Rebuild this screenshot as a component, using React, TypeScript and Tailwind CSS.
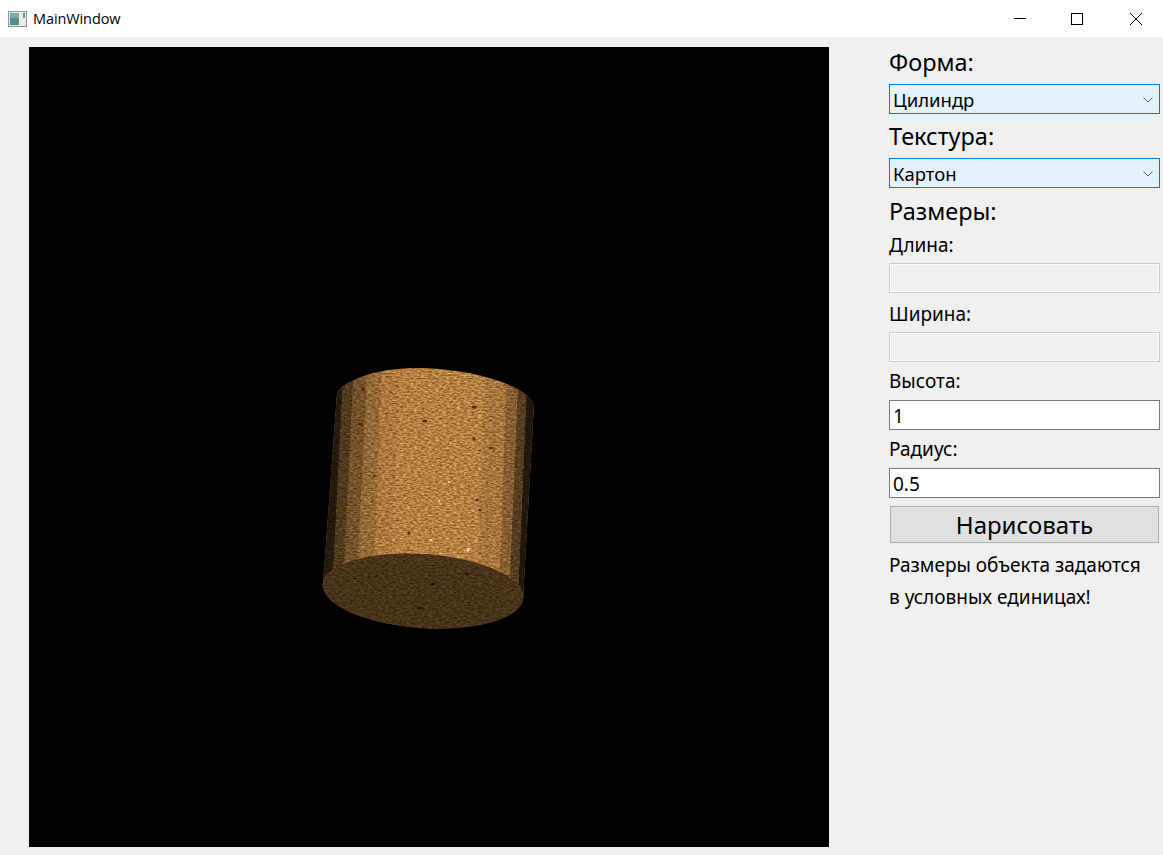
const facets = [
  { d: '320,380 343,380 332,600 310,600', o: 0.8 },
  { d: '343,380 353,380 342,610 332,600', o: 0.55 },
  { d: '353,370 367,370 355,620 342,610', o: 0.36 },
  { d: '367,360 382,360 372,620 355,620', o: 0.18 },
  { d: '382,360 400,360 388,620 372,620', o: 0.05 },
  { d: '486,360 507,360 498,620 476,620', o: 0.08 },
  { d: '507,370 518,370 508,620 498,620', o: 0.26 },
  { d: '518,380 527,380 517,620 508,620', o: 0.52 },
  { d: '527,380 545,380 535,620 517,620', o: 0.82 },
];

const specks = [
  [363, 389, 1.2, 2.5], [425, 421, 2.5, 1.2], [491, 448, 2.5, 1], [474, 439, 1.5, 1.5], [374, 476, 1.5, 1],
  [477, 500, 1.5, 1.5], [480, 510, 1.5, 1.2], [409, 533, 1.5, 1.5], [474, 407, 2.5, 1.5], [360, 424, 3, 1],
  [433, 584, 2.5, 1], [420, 608, 3, 1], [467, 574, 2, 1],
];

const lights = [[431, 540, 2, 1], [468, 550, 1.5, 1.5], [439, 501, 1, 1], [449, 482, 1, 1]];

function Cylinder() {
  const body = 'M337 393 C342 382 375 367 420 368 C470 369 525 384 534 404 L523 600 L323 584 Z';
  return (
    <svg className="block w-[800px] h-[800px]" viewBox="29 47 800 800">
      <defs>
        <filter id="card" x="0" y="0" width="100%" height="100%" colorInterpolationFilters="sRGB">
          <feTurbulence type="fractalNoise" baseFrequency="0.28 0.6" numOctaves={4} seed={7} />
          <feColorMatrix type="matrix" values="0.6 0 0 0 0.41  0.6 0 0 0 0.2  0.5 0 0 0 0.01  0 0 0 0 1" />
        </filter>
        <clipPath id="body"><path d={body} /></clipPath>
      </defs>
      <g clipPath="url(#body)">
        <rect x="310" y="355" width="240" height="260" filter="url(#card)" />
        {facets.map(f => <polygon key={f.d} points={f.d} fill="#000" opacity={f.o} />)}
        {specks.map(([x, y, rx, ry]) => <ellipse key={`${x}-${y}`} cx={x} cy={y} rx={rx} ry={ry} fill="#4a2508" />)}
        {lights.map(([x, y, rx, ry]) => <ellipse key={`${x}-${y}`} cx={x} cy={y} rx={rx} ry={ry} fill="#f3e6c8" />)}
      </g>
      <clipPath id="cap"><ellipse cx="423" cy="591" rx="100.5" ry="37" transform="rotate(4 423 591)" /></clipPath>
      <g clipPath="url(#cap)">
        <rect x="310" y="545" width="225" height="90" filter="url(#card)" />
        <rect x="310" y="545" width="225" height="90" fill="#000" opacity="0.6" />
        {specks.slice(10).map(([x, y, rx, ry]) => <ellipse key={`${x}-${y}`} cx={x} cy={y} rx={rx} ry={ry} fill="#1c0f04" />)}
      </g>
    </svg>
  );
}

function Heading({ text, className }: { text: string; className: string }) {
  return <div className={`flex items-center pt-[1px] text-[23.5px] leading-none ${className}`}>{text}</div>;
}

function Label({ text, className }: { text: string; className: string }) {
  return <div className={`flex items-center text-[19px] leading-none ${className}`}>{text}</div>;
}

function Combo({ value }: { value: string }) {
  return (
    <div className="flex h-[30px] items-center justify-between border border-[#0078d7] bg-[#e5f1fb] pl-[3px] pr-[6px] pt-[1px] text-[18.5px]">
      <span>{value}</span>
      <svg width="10" height="6" viewBox="0 0 10 6" fill="none" stroke="#606060" strokeWidth="1">
        <path d="M0.5 0.5 L5 5 L9.5 0.5" />
      </svg>
    </div>
  );
}

function Field({ value, disabled }: { value?: string; disabled?: boolean }) {
  if (disabled) {
    return <div className="h-[30px] border border-[#cccccc] bg-[#f0f0f0] shadow-[inset_0_0_0_1px_#fafafa]" />;
  }
  return (
    <input
      readOnly
      value={value}
      className="block h-[30px] w-full border border-[#7a7a7a] bg-white pl-[3px] pt-[1px] text-[19px] text-black outline-none"
    />
  );
}

export default function App() {
  return (
    <div className="flex h-[855px] w-[1163px] flex-col overflow-hidden bg-[#f0f0f0] text-black font-['Noto_Sans','Open_Sans',sans-serif]">
      <header className="flex h-[37px] shrink-0 items-center bg-white">
        <svg className="ml-[8px]" width="19" height="16" viewBox="0 0 19 16">
          <rect x="0.5" y="0.5" width="18" height="15" fill="#e8ecec" stroke="#8d9698" />
          <rect x="2" y="2" width="9" height="12" fill="#4f8f84" />
          <rect x="2" y="2" width="9" height="5" fill="#7fa6b0" />
          <rect x="15" y="2" width="2" height="5" fill="#5a9a90" />
        </svg>
        <span className="ml-[6px] text-[14.5px] font-['Open_Sans',sans-serif] tracking-[-0.1px]">MainWindow</span>
        <div className="ml-auto flex h-full">
          <div className="flex w-[58px] items-center justify-center">
            <svg width="12" height="12" viewBox="0 0 12 12" stroke="#000" fill="none"><path d="M0 5.5H12" /></svg>
          </div>
          <div className="flex w-[58px] items-center justify-center pr-[2px]">
            <svg width="12" height="12" viewBox="0 0 12 12" stroke="#000" fill="none"><rect x="0.5" y="0.5" width="11" height="11" /></svg>
          </div>
          <div className="flex w-[56px] items-center justify-center pl-[2px]">
            <svg width="12" height="12" viewBox="0 0 12 12" stroke="#000" fill="none"><path d="M0 0L12 12M12 0L0 12" /></svg>
          </div>
        </div>
      </header>
      <main className="flex flex-1">
        <div className="ml-[29px] mt-[10px] h-[800px] w-[800px] shrink-0 bg-black">
          <Cylinder />
        </div>
        <aside className="ml-[60px] mt-[3px] flex w-[271px] shrink-0 flex-col">
          <Heading text="Форма:" className="h-[44px]" />
          <Combo value="Цилиндр" />
          <Heading text="Текстура:" className="h-[44px]" />
          <Combo value="Картон" />
          <Heading text="Размеры:" className="h-[46px]" />
          <Label text="Длина:" className="h-[29px] pb-[7px]" />
          <Field disabled />
          <Label text="Ширина:" className="h-[39px] pt-[3px]" />
          <Field disabled />
          <Label text="Высота:" className="h-[38px]" />
          <Field value="1" />
          <Label text="Радиус:" className="h-[38px]" />
          <Field value="0.5" />
          <button className="mx-[1px] mt-[8px] h-[37px] border border-[#adadad] bg-[#e1e1e1] text-[24px] leading-none">
            Нарисовать
          </button>
          <p className="mt-[6px] text-[19px] leading-[32px]">
            Размеры объекта задаются
            <br />
            в условных единицах!
          </p>
        </aside>
      </main>
    </div>
  );
}
